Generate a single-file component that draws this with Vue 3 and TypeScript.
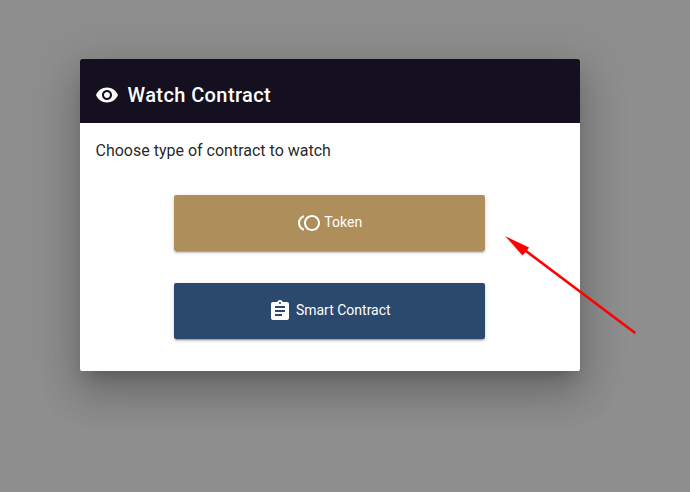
<script setup lang="ts">
interface Choice {
  id: string
  label: string
  icon: string
}

const choices: Choice[] = [
  {
    id: 'token',
    label: 'Token',
    icon: 'M15 4c-4.42 0-8 3.58-8 8s3.58 8 8 8 8-3.58 8-8-3.58-8-8-8zm0 14c-3.31 0-6-2.69-6-6s2.69-6 6-6 6 2.69 6 6-2.69 6-6 6zM3 12c0-2.61 1.67-4.83 4-5.65V4.26C3.55 5.15 1 8.27 1 12s2.55 6.85 6 7.74v-2.09c-2.33-.82-4-3.04-4-5.65z',
  },
  {
    id: 'contract',
    label: 'Smart Contract',
    icon: 'M19 3h-4.18C14.4 1.84 13.3 1 12 1c-1.3 0-2.4.84-2.82 2H5c-1.1 0-2 .9-2 2v14c0 1.1.9 2 2 2h14c1.1 0 2-.9 2-2V5c0-1.1-.9-2-2-2zm-7 0c.55 0 1 .45 1 1s-.45 1-1 1-1-.45-1-1 .45-1 1-1zm2 14H7v-2h7v2zm3-4H7v-2h10v2zm0-4H7V7h10v2z',
  },
]
</script>

<template>
  <main class="overlay">
    <section class="dialog" role="dialog" aria-labelledby="dialog-title">
      <header class="header">
        <svg class="icon" viewBox="0 0 24 24" aria-hidden="true">
          <path d="M12 4.5C7 4.5 2.73 7.61 1 12c1.73 4.39 6 7.5 11 7.5s9.27-3.11 11-7.5c-1.73-4.39-6-7.5-11-7.5zM12 17c-2.76 0-5-2.24-5-5s2.24-5 5-5 5 2.24 5 5-2.24 5-5 5zm0-8c-1.66 0-3 1.34-3 3s1.34 3 3 3 3-1.34 3-3-1.34-3-3-3z" />
        </svg>
        <h1 id="dialog-title" class="title">Watch Contract</h1>
      </header>
      <div class="body">
        <p class="prompt">Choose type of contract to watch</p>
        <div class="choices">
          <button v-for="choice in choices" :key="choice.id" type="button" class="choice" :class="choice.id">
            <svg class="icon" viewBox="0 0 24 24" aria-hidden="true">
              <path :d="choice.icon" />
            </svg>
            <span class="label">{{ choice.label }}</span>
          </button>
        </div>
      </div>
    </section>
    <svg class="pointer" viewBox="0 0 690 492" aria-hidden="true">
      <path d="M524 249.5L634.5 332.5" fill="none" stroke="#f00" stroke-width="2.6" stroke-linecap="round" />
      <path d="M505 236L529 247.5L527 250.5L522.5 255.5Z" fill="#f00" />
    </svg>
  </main>
</template>

<style>
body {
  margin: 0;
  overflow: hidden;
}
</style>

<style scoped>
.overlay {
  position: relative;
  box-sizing: border-box;
  width: 690px;
  height: 492px;
  padding: 59px 110px 0 80px;
  background: #8e8e8e;
  font-family: Roboto, "Liberation Sans", sans-serif;
  overflow: hidden;
}

.dialog {
  height: 312px;
  border-radius: 2px;
  background: #fff;
  overflow: hidden;
  box-shadow:
    0 11px 15px -7px rgba(0, 0, 0, 0.2),
    0 24px 38px 3px rgba(0, 0, 0, 0.14),
    0 9px 46px 8px rgba(0, 0, 0, 0.12);
}

.header {
  display: flex;
  align-items: center;
  gap: 8.5px;
  box-sizing: border-box;
  height: 64px;
  padding: 8px 15px 0;
  background: #14101f;
  color: #fff;
}

.icon {
  display: block;
  flex: none;
  width: 24px;
  height: 24px;
  fill: currentColor;
}

.title {
  margin: 0;
  font-size: 20px;
  font-weight: 500;
  line-height: 24px;
  letter-spacing: 0.4px;
}

.body {
  padding: 16px 95px 0 94px;
}

.prompt {
  margin: 0 0 32px -78.5px;
  color: rgba(0, 0, 0, 0.87);
  font-size: 16px;
  line-height: 24px;
}

.choices {
  display: flex;
  flex-direction: column;
  gap: 32px;
}

.choice {
  display: flex;
  align-items: center;
  justify-content: center;
  gap: 3.5px;
  box-sizing: border-box;
  width: 311px;
  height: 56px;
  margin: 0;
  padding: 0;
  border: 0;
  border-radius: 2px;
  color: #fff;
  font: 400 14px/20px Roboto, "Liberation Sans", sans-serif;
  box-shadow:
    0 3px 1px -2px rgba(0, 0, 0, 0.2),
    0 2px 2px 0 rgba(0, 0, 0, 0.14),
    0 1px 5px 0 rgba(0, 0, 0, 0.12);
}

.label {
  padding-bottom: 2px;
}

.token {
  background: #ae8f5b;
}

.contract {
  background: #2b486d;
}

.pointer {
  position: absolute;
  inset: 0;
  width: 690px;
  height: 492px;
  pointer-events: none;
}
</style>
